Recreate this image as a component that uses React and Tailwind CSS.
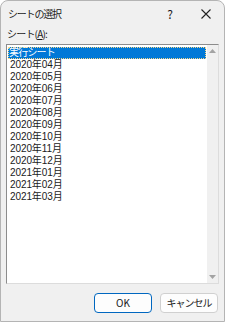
const rows = [
  '2020年04月',
  '2020年05月',
  '2020年06月',
  '2020年07月',
  '2020年08月',
  '2020年09月',
  '2020年10月',
  '2020年11月',
  '2020年12月',
  '2021年01月',
  '2021年02月',
  '2021年03月',
];

const font = { fontFamily: '"Noto Sans CJK JP", "Noto Sans", sans-serif' };
const listFont = { fontFamily: '"Liberation Sans", "Noto Sans CJK JP", sans-serif' };

export default function App() {
  return (
    <div
      className="w-[225px] h-[322px] bg-[#f0f0f0] border border-[#b4b4b4] rounded-t-[8px] flex flex-col text-[#1a1a1a] overflow-hidden"
      style={font}
    >
      <div className="h-[25px] flex items-center pl-[7px] text-[10px] tracking-[-1.2px] shrink-0">
        <span>シートの選択</span>
        <span className="ml-auto w-[36px] text-center text-[12px] tracking-normal">?</span>
        <span className="w-[36px] flex justify-center">
          <svg width="10" height="10" viewBox="0 0 10 10" stroke="#222" strokeWidth="1.1">
            <path d="M0.5 0.5 L9.5 9.5 M9.5 0.5 L0.5 9.5" />
          </svg>
        </span>
      </div>
      <div className="px-[5px] flex-1 flex flex-col">
        <div className="h-[18px] text-[10px] leading-[14px] pt-[1px] pl-[1px] tracking-[-0.8px]">
          シート(<span className="underline">A</span>):
        </div>
        <div className="h-[240px] flex border border-[#8c8c8c] border-r-[#dcdcdc] border-b-[#dcdcdc] bg-white">
          <div className="flex-1 flex flex-col pt-[2px] pl-[1px] text-[10px] leading-[12px]" style={listFont}>
            <div className="h-[12px] bg-[#0078d7] text-white pl-[1px] tracking-[-0.8px] outline-1 outline-dotted outline-[#f5d78a] -outline-offset-1">
              実行シート
            </div>
            {rows.map((r) => (
              <div key={r} className="h-[12px] pl-[2px] tracking-[-0.1px] overflow-hidden">
                {r}
              </div>
            ))}
          </div>
          <div className="w-[12px] bg-[#f0f0f0] border-l border-white flex flex-col items-center justify-between py-[4px]">
            <svg width="7" height="4" viewBox="0 0 7 4">
              <path d="M0 4 L3.5 0 L7 4 Z" fill="#a3a3a3" />
            </svg>
            <svg width="7" height="4" viewBox="0 0 7 4">
              <path d="M0 0 L3.5 4 L7 0 Z" fill="#a3a3a3" />
            </svg>
          </div>
        </div>
        <div className="flex justify-end gap-[8px] mt-[9px] pr-[1px]">
          <button className="w-[58px] h-[20px] rounded-[4px] border border-[#0067c0] bg-[#fdfdfd] text-[10px] leading-none">
            OK
          </button>
          <button className="w-[58px] h-[20px] rounded-[4px] border border-[#d0d0d0] bg-[#fdfdfd] text-[10px] leading-none tracking-[-1px]">
            キャンセル
          </button>
        </div>
      </div>
    </div>
  );
}
